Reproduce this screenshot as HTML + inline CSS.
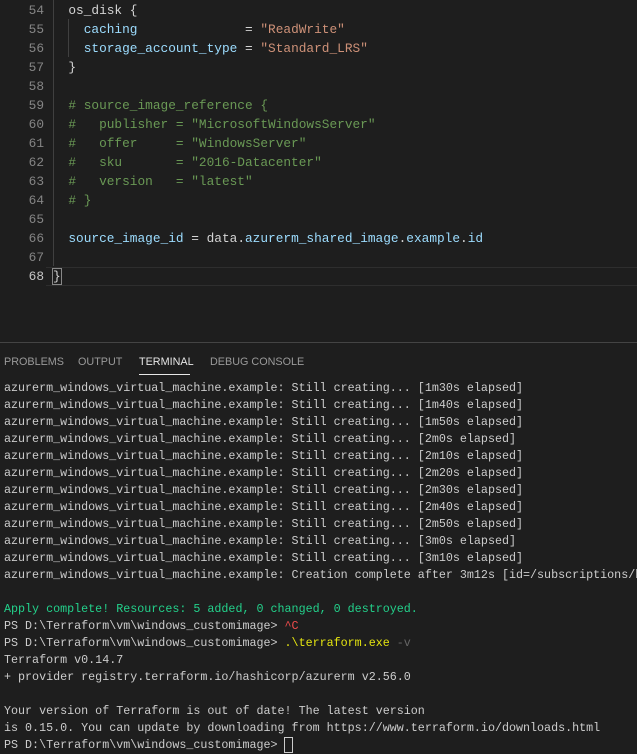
<!DOCTYPE html><html><head><style>
body{margin:0;width:637px;height:741px;overflow:hidden;background:#1e1e1e;position:relative}
.ed{position:absolute;left:0;top:0;width:637px;font-family:"Liberation Mono",monospace;font-size:12.8px;color:#d4d4d4}
.l{position:absolute;left:0;height:19px;line-height:19px;white-space:pre}
.n{position:absolute;left:0;width:44px;text-align:right;color:#858585;font-size:12.8px}
.c{position:absolute;left:53px}
.k{color:#9cdcfe}.s{color:#ce9178}.cm{color:#6a9955}
.term{position:absolute;left:4px;top:380px;font-family:"Liberation Mono",monospace;font-size:11.7px;color:#cccccc;line-height:17px;white-space:pre}
.tabs{position:absolute;top:356px;left:4px;font-family:"Liberation Sans",sans-serif;font-size:10.8px;color:#9a9a9a}
.tabs span{position:absolute;white-space:nowrap}
</style></head><body>
<div class="ed">
<div style="position:absolute;left:53px;top:0;width:1px;height:266px;background:#404040"></div>
<div style="position:absolute;left:68px;top:19px;width:1px;height:38px;background:#404040"></div>
<div style="position:absolute;left:46px;top:267px;width:591px;height:17px;border-top:1px solid #2e2e2e;border-bottom:1px solid #2e2e2e"></div>
<div class="l" style="top:1px"><span class="n">54</span><span class="c">  os_disk {</span></div>
<div class="l" style="top:20px"><span class="n">55</span><span class="c">    <span class="k">caching</span>              = <span class="s">"ReadWrite"</span></span></div>
<div class="l" style="top:39px"><span class="n">56</span><span class="c">    <span class="k">storage_account_type</span> = <span class="s">"Standard_LRS"</span></span></div>
<div class="l" style="top:58px"><span class="n">57</span><span class="c">  }</span></div>
<div class="l" style="top:77px"><span class="n">58</span></div>
<div class="l" style="top:96px"><span class="n">59</span><span class="c cm">  # source_image_reference {</span></div>
<div class="l" style="top:115px"><span class="n">60</span><span class="c cm">  #   publisher = "MicrosoftWindowsServer"</span></div>
<div class="l" style="top:134px"><span class="n">61</span><span class="c cm">  #   offer     = "WindowsServer"</span></div>
<div class="l" style="top:153px"><span class="n">62</span><span class="c cm">  #   sku       = "2016-Datacenter"</span></div>
<div class="l" style="top:172px"><span class="n">63</span><span class="c cm">  #   version   = "latest"</span></div>
<div class="l" style="top:191px"><span class="n">64</span><span class="c cm">  # }</span></div>
<div class="l" style="top:210px"><span class="n">65</span></div>
<div class="l" style="top:229px"><span class="n">66</span><span class="c">  <span class="k">source_image_id</span> = data.<span class="k">azurerm_shared_image</span>.<span class="k">example</span>.<span class="k">id</span></span></div>
<div class="l" style="top:248px"><span class="n">67</span></div>
<div class="l" style="top:267px"><span class="n" style="color:#c6c6c6">68</span><span class="c"><span style="outline:1px solid #888">}</span></span></div>
</div>
<div style="position:absolute;left:0;top:342px;width:637px;height:1px;background:#444"></div>
<div class="tabs">
<span style="left:0">PROBLEMS</span><span style="left:74px">OUTPUT</span><span style="left:135px;color:#e7e7e7">TERMINAL</span><span style="left:206px">DEBUG CONSOLE</span>
</div>
<div style="position:absolute;left:139px;top:374px;width:51px;height:1px;background:#e7e7e7"></div>
<div class="term">azurerm_windows_virtual_machine.example: Still creating... [1m30s elapsed]
azurerm_windows_virtual_machine.example: Still creating... [1m40s elapsed]
azurerm_windows_virtual_machine.example: Still creating... [1m50s elapsed]
azurerm_windows_virtual_machine.example: Still creating... [2m0s elapsed]
azurerm_windows_virtual_machine.example: Still creating... [2m10s elapsed]
azurerm_windows_virtual_machine.example: Still creating... [2m20s elapsed]
azurerm_windows_virtual_machine.example: Still creating... [2m30s elapsed]
azurerm_windows_virtual_machine.example: Still creating... [2m40s elapsed]
azurerm_windows_virtual_machine.example: Still creating... [2m50s elapsed]
azurerm_windows_virtual_machine.example: Still creating... [3m0s elapsed]
azurerm_windows_virtual_machine.example: Still creating... [3m10s elapsed]
azurerm_windows_virtual_machine.example: Creation complete after 3m12s [id=/subscriptions/b

<span style="color:#23d18b">Apply complete! Resources: 5 added, 0 changed, 0 destroyed.</span>
PS D:\Terraform\vm\windows_customimage> <span style="color:#f14c4c">^C</span>
PS D:\Terraform\vm\windows_customimage> <span style="color:#e5e510">.\terraform.exe</span> <span style="color:#666">-v</span>
Terraform v0.14.7
+ provider registry.terraform.io/hashicorp/azurerm v2.56.0

Your version of Terraform is out of date! The latest version
is 0.15.0. You can update by downloading from https://www.terraform.io/downloads.html
PS D:\Terraform\vm\windows_customimage> <span style="outline:1px solid #ccc">&nbsp;</span></div>
</body></html>
